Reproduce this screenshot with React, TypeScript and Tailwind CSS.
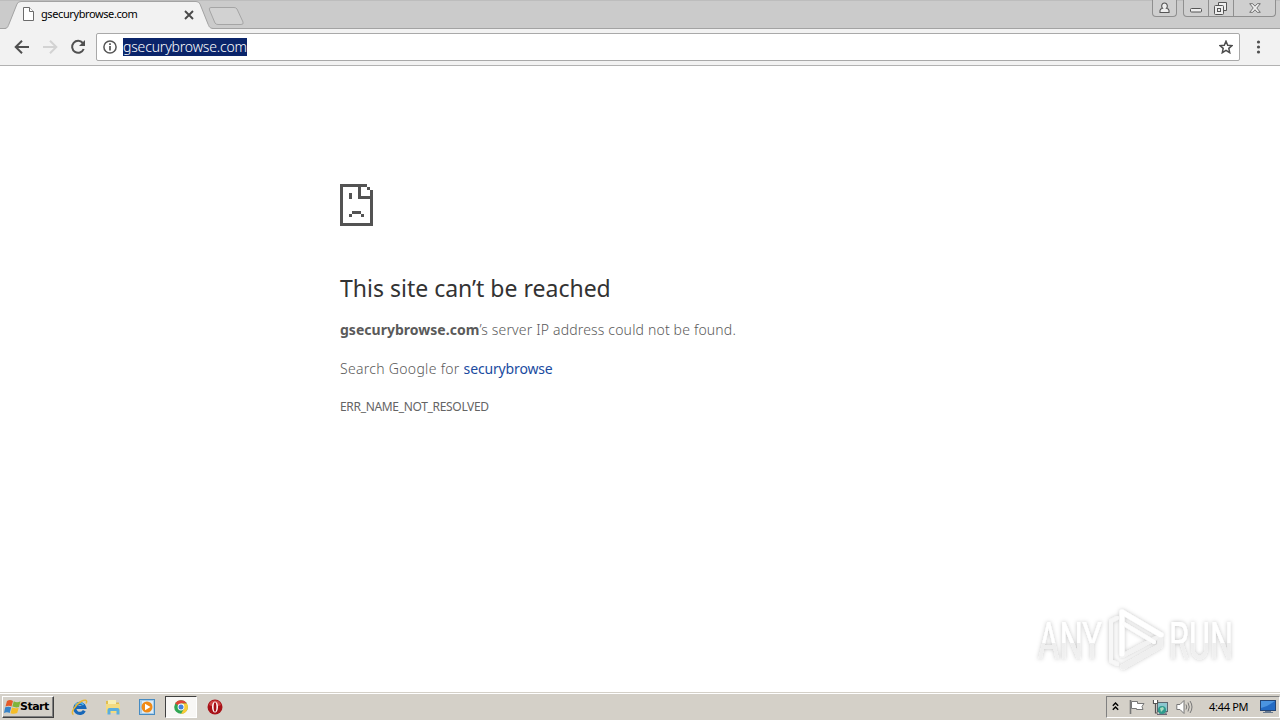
import type { ReactNode } from "react";

const UI = "font-['Noto_Sans','Open_Sans',sans-serif]";

function TabStrip() {
  return (
    <div className="relative flex h-[29px] flex-none justify-between bg-[#cbcbcb]">
      <svg className="absolute left-0 top-0" width="1280" height="29" viewBox="0 0 1280 29" fill="none">
        <path d="M0 .5H1280" stroke="#bdbdbd" />
        <path d="M0 28.5H1280" stroke="#a3a3a3" />
        <path d="M5 29C8 28 8 26 9 24L17 4Q18 1.500 21 1.500H196Q199 1.500 200 4L208 24C209 26 209 28 213 29Z" fill="#f2f2f2" />
        <path d="M5 28.500C8 28 8 26 9 24L17 4Q18 1.500 21 1.500H196Q199 1.500 200 4L208 24C209 26 209 28 213 28.500" stroke="#a3a3a3" />
        <path d="M211 7.500H234Q236 7.500 237 9L243 22Q244 24.500 241 24.500H218Q216 24.500 215 23L209.500 10Q208.500 7.500 211 7.500Z" fill="#d2d2d2" stroke="#a5a5a5" />
      </svg>

      <div className="relative flex h-[28px] w-[200px] items-center pl-[23px]">
        <svg width="11" height="14" viewBox="0 0 11 14" fill="#fff" stroke="#6b6b6b"><path d="M.5.5H6.500L10.500 4.500V13.500H.5Z" /><path d="M6.500.5V4.500H10.500" /></svg>
        <span className="ml-[7px] w-[143px] whitespace-nowrap text-[11px] leading-[14px] tracking-[-0.4px] text-black">gsecurybrowse.com</span>
        <svg className="mt-[2px]" width="10" height="10" viewBox="0 0 10 10" stroke="#4a4a4a" strokeWidth="1.900"><path d="M1 1L9 9M9 1L1 9" /></svg>
      </div>

      {/* profile + window controls */}
      <div className="relative flex h-[17px] pr-[4px]">
        <div className="mr-[6px] flex w-[25px] items-center justify-center rounded-b-[4px] border border-t-0 border-[#8f8f8f] bg-[#cfcfcf]">
          <svg width="11" height="12" viewBox="0 0 11 12" fill="#eee" stroke="#555" strokeWidth="1.100"><path d="M1 10.500V8.500Q1 7 3.500 6.300Q2.500 5.500 2.700 3.500Q3.200 1 5.500 1T8.300 3.500Q8.500 5.500 7.500 6.300Q10 7 10 8.500V10.500Z" /></svg>
        </div>
        <div className="flex rounded-b-[4px] border border-t-0 border-[#8f8f8f] bg-[#cfcfcf]">
          <div className="flex w-[24px] items-end justify-center pb-[3px]">
            <svg width="12" height="5" viewBox="0 0 12 5" fill="#eee" stroke="#555"><rect x=".5" y=".5" width="11" height="3.500" rx="1" /></svg>
          </div>
          <div className="flex w-[26px] items-center justify-center border-x border-[#8f8f8f] pr-[1px]">
            <svg width="13" height="13" viewBox="0 0 13 13" fill="#eee" stroke="#555"><path d="M4.500 3.500V.5H12.500V8.500H9" /><rect x=".5" y="3.500" width="9" height="9" rx="1" /><rect x="3.500" y="6.500" width="3" height="3" /></svg>
          </div>
          <div className="flex w-[41px] items-center justify-center">
            <svg width="12" height="10" viewBox="0 0 12 10" fill="#eee" stroke="#666" strokeWidth=".9"><path d="M.7.7H3.700L6 3.200L8.300.7H11.300L7.800 5L11.300 9.300H8.300L6 6.800L3.700 9.300H.7L4.200 5Z" /></svg>
          </div>
        </div>
      </div>
    </div>
  );
}

function Toolbar() {
  return (
    <div className="flex h-[37px] flex-none items-center border-b border-[#b2b2b2] bg-[#f2f2f2] pl-[14px]">
      <svg width="16" height="16" viewBox="0 0 16 16" fill="none" stroke="#505050" strokeWidth="2"><path d="M15 8H2.500M8 1.700L1.700 8L8 14.300" /></svg>
      <svg className="ml-[12px]" width="16" height="16" viewBox="0 0 16 16" fill="none" stroke="#d3d3d3" strokeWidth="2"><path d="M1 8H13.500M8 1.700L14.300 8L8 14.300" /></svg>
      <svg className="ml-[12px]" width="16" height="16" viewBox="0 0 16 16" fill="none" stroke="#505050" strokeWidth="2"><path d="M12.800 4A6 6 0 1 0 13.700 10" /><path d="M15 1V7H9Z" fill="#505050" stroke="none" /></svg>
      <div className="ml-[10px] flex h-[28px] w-[1144px] items-center rounded-[2px] border border-[#a9a9a9] bg-white pl-[6px] pr-[6px]">
        <svg width="14" height="14" viewBox="0 0 14 14" fill="none" stroke="#555" strokeWidth="1.500"><circle cx="7" cy="7" r="6.100" /><path d="M7 6V10.500M7 3.300V4.900" strokeWidth="1.700" /></svg>
        <span className="ml-[6px] h-[18px] w-[124px] whitespace-nowrap bg-[#0a246a] text-[14px] font-light leading-[18px] tracking-[-0.17px] text-white">gsecurybrowse.com</span>
        <svg className="ml-auto" width="14" height="14" viewBox="0 0 14 14" fill="none" stroke="#4d4d4d" strokeWidth="1.500"><path d="M7 1.200L8.700 5.200L13 5.600L9.800 8.400L10.700 12.700L7 10.400L3.300 12.700L4.200 8.400L1 5.600L5.300 5.200Z" /></svg>
      </div>
      <svg className="ml-[16px]" width="5" height="14" viewBox="0 0 5 14" fill="#505050"><circle cx="2.500" cy="2" r="1.600" /><circle cx="2.500" cy="7" r="1.600" /><circle cx="2.500" cy="12" r="1.600" /></svg>
    </div>
  );
}

function SadPage() {
  return (
    <svg width="33" height="42" viewBox="0 0 11 14" fill="#535353" shapeRendering="crispEdges">
      <path d="M0 0H9V1H7V4H11V5H6V1H1V13H10V2H11V14H0ZM9 1H10V2H9ZM3 3H4V5H3ZM4 9H7V10H4ZM3 10H4V11H3ZM7 10H8V11H7Z" />
    </svg>
  );
}

function Watermark() {
  return (
    <svg className="absolute bottom-[14px] right-[36px] overflow-visible" width="216" height="76" viewBox="1028 602 216 76">
      <defs>
        <linearGradient id="fade" x1="0" y1="0" x2="0" y2="1">
          <stop offset=".52" stopColor="#fff" />
          <stop offset=".53" stopColor="#eee" />
          <stop offset="1" stopColor="#f3f3f3" />
        </linearGradient>
        <filter id="soft" x="-10%" y="-20%" width="120%" height="140%">
          <feDropShadow dx="0" dy="0" stdDeviation="2" floodColor="#000" floodOpacity=".25" />
        </filter>
      </defs>
      <g filter="url(#soft)">
        <g fill="url(#fade)" fontFamily="Roboto, sans-serif" fontSize="51">
          <text x="1038" y="659" textLength="64" lengthAdjust="spacingAndGlyphs">ANY</text>
          <text x="1169" y="659" textLength="64" lengthAdjust="spacingAndGlyphs">RUN</text>
        </g>
        <g fill="none" strokeLinejoin="round" strokeLinecap="round">
          <path d="M1117 618L1111 621V661L1117 664" stroke="#f7f7f7" strokeWidth="4" />
          <path d="M1122 656L1158 637" stroke="#f2f2f2" strokeWidth="4" />
          <path d="M1123 667L1160 646V640" stroke="#efefef" strokeWidth="5" />
          <path d="M1122 654V612L1161 635" stroke="#fff" strokeWidth="5" />
          <path d="M1124 624L1154 642" stroke="#fdfdfd" strokeWidth="4" />
        </g>
      </g>
    </svg>
  );
}

function ErrorPage() {
  return (
    <main className="relative min-h-0 flex-1 bg-white pl-[340px] pt-[118px] text-[#5a5a5a]">
      <SadPage />
      <h1 className="mt-[46px] whitespace-nowrap text-[23px] leading-[32px] text-[#333]">This site can’t be reached</h1>
      <p className="mt-[16px] whitespace-nowrap text-[14px] font-light leading-[20px] tracking-[0.17px]">
        <b className="font-bold tracking-[0.02px] text-[#5a5a5a]">gsecurybrowse.com</b>’s server IP address could not be found.
      </p>
      <p className="mt-[19px] whitespace-nowrap text-[14px] font-light leading-[20px] tracking-[0.3px]">
        Search Google for <span className="font-normal tracking-[-0.15px] text-[#1a4b9f]">securybrowse</span>
      </p>
      <div className="mt-[20px] whitespace-nowrap text-[12px] leading-[16px] tracking-[-0.32px] text-[#646464]">ERR_NAME_NOT_RESOLVED</div>
      <Watermark />
    </main>
  );
}

function QuickItem({ active, children }: { active?: boolean; children: ReactNode }) {
  const frame = active ? "border border-b-white border-l-[#404040] border-r-white border-t-[#404040] bg-[#f8f7f5]" : "";
  return <div className={`flex h-[22px] w-[32px] items-center justify-center ${frame}`}>{children}</div>;
}

function Taskbar() {
  return (
    <footer className="flex h-[28px] flex-none items-start border-t border-[#d4d0c8] bg-[#d4d0c8] pl-[2px] pt-[3px] shadow-[inset_0_1px_0_#fff]">
      <button className="flex h-[22px] w-[52px] items-center border border-b-[#404040] border-l-white border-r-[#404040] border-t-white pl-[1px] shadow-[inset_-1px_-1px_0_#808080]">
        <svg width="17" height="16" viewBox="0 0 17 16">
          <path d="M3 2Q6 0 9 2L7.500 7.500Q5 6 1.500 7.500Z" fill="#e65a28" />
          <path d="M9.800 2.300Q13 4 16.500 2.300L15 8Q12 9 8.300 7.600Z" fill="#7fb43b" />
          <path d="M1.200 8.300Q4.500 7 7.200 8.300L5.700 14Q3 12.500 0 14Z" fill="#3883c8" />
          <path d="M8 8.500Q11.500 10 14.700 8.700L13.200 14Q10 15.500 6.500 14.200Z" fill="#f5bd28" />
        </svg>
        <span className="ml-[-1px] mt-[1px] font-['DejaVu_Sans',sans-serif] text-[11px] font-bold tracking-[-0.5px] text-black">Start</span>
      </button>

      <div className="ml-[9px] flex gap-[2px]">
        <QuickItem>
          <svg width="17" height="17" viewBox="0 0 17 17" fill="none">
            <path d="M13.300 11.700A5 5 0 1 1 13.700 8.300H4.500" stroke="#1767b8" strokeWidth="3.200" />
            <path d="M4 6.500A5 5 0 0 1 12.500 6" stroke="#4fb4ee" strokeWidth="1.500" />
            <path d="M2.500 15.500C-1 14.500 4 6 10 2.500C14 .2 17 1 15 4.500" stroke="#e7b736" strokeWidth="1.500" />
          </svg>
        </QuickItem>
        <QuickItem>
          <svg width="16" height="16" viewBox="0 0 16 16">
            <path d="M1 2H6L7.500 3.500H14V14H1Z" fill="#e0bd4f" />
            <path d="M3 1H11V6H3Z" fill="#f7efb5" />
            <path d="M1 5H15V14H1Z" fill="#f3db80" />
            <path d="M2.500 15.500V11Q2.500 9 4.500 9H12.500Q14.500 9 14.500 11V15.500H11.500V12H5.500V15.500Z" fill="#5aaede" />
          </svg>
        </QuickItem>
        <QuickItem>
          <svg width="16" height="16" viewBox="0 0 16 16">
            <rect x=".5" y=".5" width="15" height="15" fill="#a8cde9" stroke="#468bc2" />
            <rect x="3" y="2" width="11" height="12" fill="#ddecf7" />
            <circle cx="8" cy="8" r="5.500" fill="#f08a16" />
            <path d="M6 4.700L11.500 8L6 11.300Z" fill="#fff" />
          </svg>
        </QuickItem>
        <QuickItem active>
          <svg width="14" height="14" viewBox="0 0 14 14">
            <circle cx="7" cy="7" r="6.800" fill="#30a653" />
            <path d="M7 7L1.100 3.600A6.800 6.800 0 0 1 12.900 3.600H7Z" fill="#df4535" />
            <path d="M7 3.600H12.900A6.800 6.800 0 0 1 7 13.800L10 8.700Z" fill="#fbcb37" />
            <circle cx="7" cy="7" r="3.400" fill="#fff" />
            <circle cx="7" cy="7" r="2.500" fill="#4381dc" />
          </svg>
        </QuickItem>
        <QuickItem>
          <svg className="-ml-px" width="16" height="16" viewBox="0 0 16 16">
            <circle cx="8" cy="8" r="7.500" fill="#a81218" />
            <path d="M2 6A6.300 6.300 0 0 1 14 6Q8 9 2 6Z" fill="#cf4545" />
            <ellipse cx="8" cy="8" rx="3" ry="5.500" fill="#fff" />
            <ellipse cx="8" cy="8" rx="1.400" ry="4.700" fill="#a80f16" />
          </svg>
        </QuickItem>
      </div>

      <div className="ml-auto flex h-[22px] w-[174px] items-center border border-b-white border-l-[#808080] border-r-white border-t-[#808080] pl-[5px]">
        <svg className="mb-[2px]" width="7" height="9" viewBox="0 0 7 9" fill="none" stroke="#000" strokeWidth="1.400"><path d="M.8 3.800L3.500 1L6.200 3.800M.8 7.800L3.500 5L6.200 7.800" /></svg>
        <svg className="ml-[10px]" width="16" height="16" viewBox="0 0 16 16" fill="#fff" stroke="#777"><path d="M1.500 1V15" strokeWidth="1.600" /><path d="M2.500 2.500H8.500V4.500H15L13 7.500L14 10.500H7.500V9.500H2.500Z" /></svg>
        <svg className="ml-[7px]" width="17" height="17" viewBox="0 0 17 17">
          <rect x="5.500" y="3.500" width="10" height="9" fill="#8cc7cf" stroke="#5c6770" />
          <path d="M5 15.500H15M8 13V15H14V13" fill="none" stroke="#667" />
          <circle cx="10" cy="11" r="4" fill="#2f9b8d" />
          <path d="M8 9L11 8L12 10L9 13Z" fill="#a9dcc0" />
          <path d="M1.500 1V4.500H5.500V1M3.500 4V14H6" fill="none" stroke="#555" strokeWidth="1.200" />
          <path d="M2 1H5V4H2Z" fill="#fff" />
        </svg>
        <svg className="ml-[7px]" width="17" height="16" viewBox="0 0 17 16" fill="none" stroke="#777"><path d="M.8 5.500H4L8 1.500V14.500L4 10.500H.8Z" fill="#fff" /><path d="M10 5.500Q11.500 8 10 10.500M12 3.500Q14.500 8 12 12.500M14 2Q18 8 14 14" /></svg>
        <span className="ml-[16px] w-[41px] whitespace-nowrap text-[11px] tracking-[-0.3px] text-black">4:44 PM</span>
        <svg className="ml-[10px]" width="16" height="14" viewBox="0 0 16 14"><rect x=".5" y=".5" width="15" height="10" fill="#246bc4" stroke="#244575" /><path d="M1 1H15L7 6L1 8Z" fill="#4b94e0" /><path d="M5 11H11V12H13V13H3V12H5Z" fill="#68798e" /></svg>
      </div>
    </footer>
  );
}

export default function App() {
  return (
    <div className={`flex h-[720px] w-[1280px] flex-col overflow-hidden bg-white ${UI}`}>
      <TabStrip />
      <Toolbar />
      <ErrorPage />
      <Taskbar />
    </div>
  );
}
